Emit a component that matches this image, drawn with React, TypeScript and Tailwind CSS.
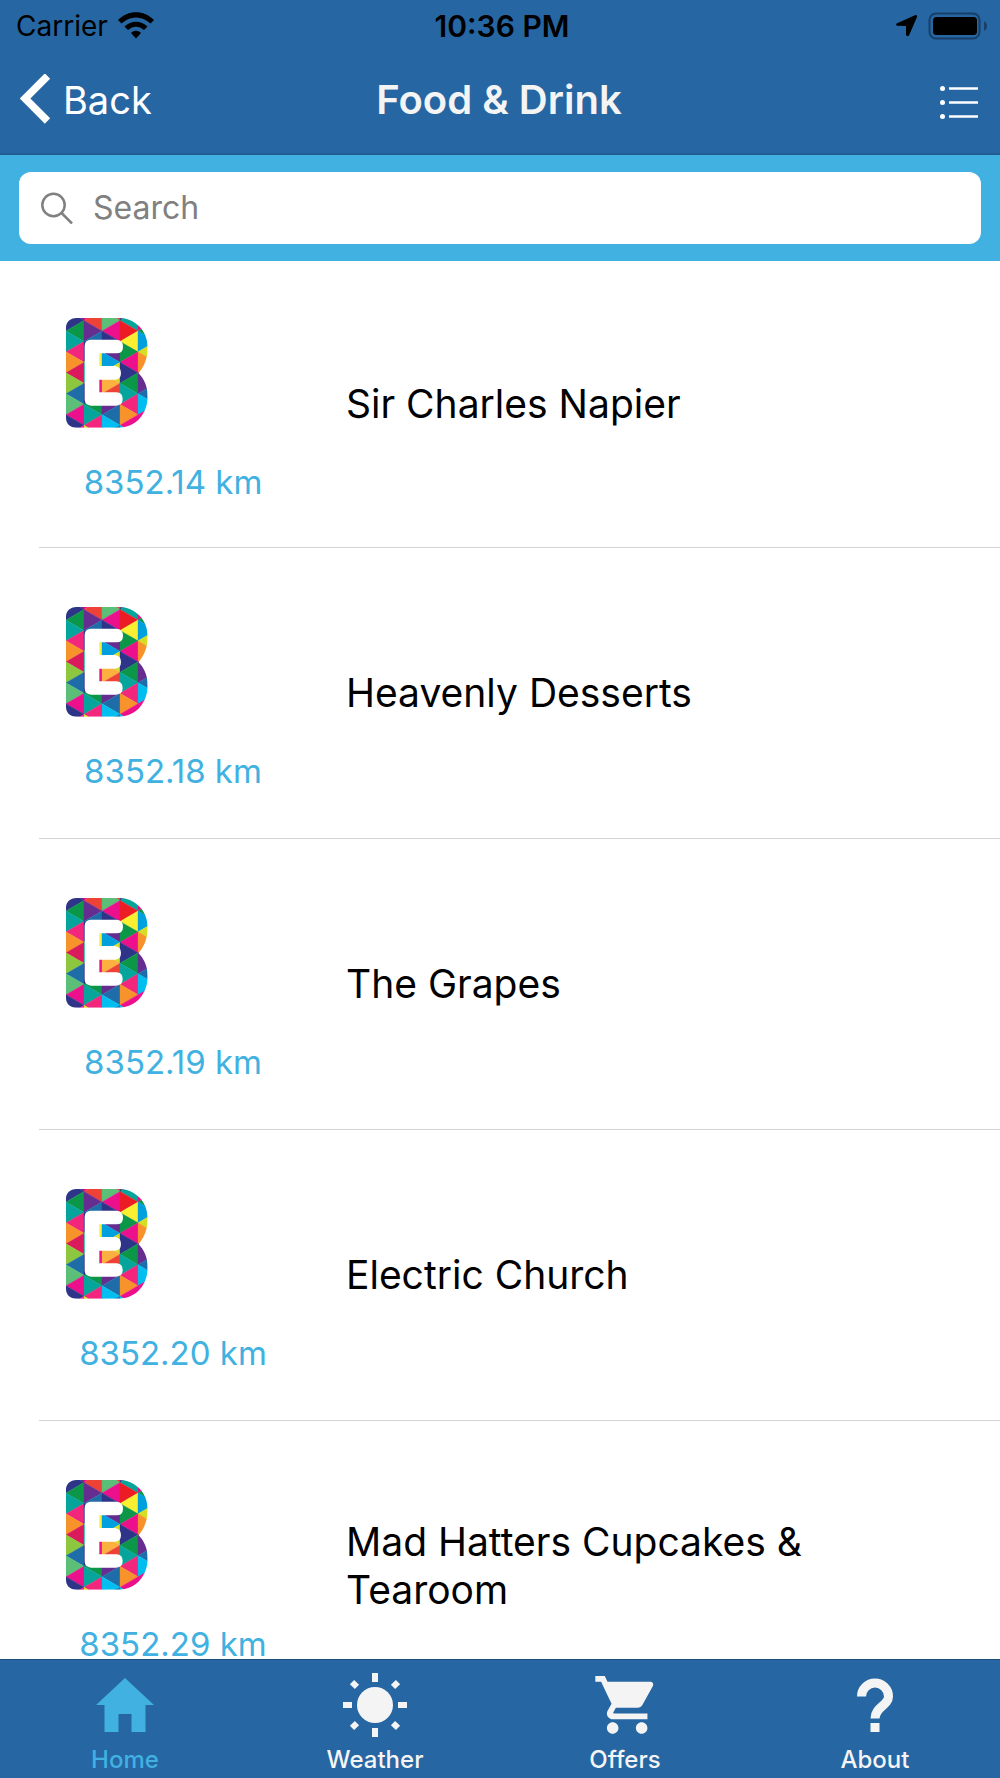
import { useState } from "react";
import { MdShoppingCart } from "react-icons/md";

type Place = {
  id: number;
  name: string;
  distance: string;
};

const places: Place[] = [
  { id: 1, name: "Sir Charles Napier", distance: "8352.14 km" },
  { id: 2, name: "Heavenly Desserts", distance: "8352.18 km" },
  { id: 3, name: "The Grapes", distance: "8352.19 km" },
  { id: 4, name: "Electric Church", distance: "8352.20 km" },
  { id: 5, name: "Mad Hatters Cupcakes & Tearoom", distance: "8352.29 km" },
];

const c = {
  navy: "#2e3589",
  purple: "#662d91",
  green: "#0b9648",
  mint: "#5bbf78",
  teal: "#06a59b",
  pink: "#f1267c",
  magenta: "#ec108c",
  crimson: "#da1a5c",
  red: "#ec1c24",
  coral: "#ef4237",
  orange: "#f7932a",
  amber: "#fbb040",
  yellow: "#fbef31",
  lime: "#8dc73f",
  acid: "#d6de23",
  blue: "#1f6da8",
  sky: "#009fdd",
  cyan: "#00bff0",
};

// One list per vertical band of the mosaic, top to bottom
const mosaic = [
  [c.purple, c.navy, c.green, c.teal, c.pink, c.orange, c.crimson, c.lime, c.blue, c.mint, c.magenta, c.navy, c.magenta],
  [c.magenta, c.coral, c.purple, c.blue, c.navy, c.yellow, c.teal, c.magenta, c.navy, c.green, c.teal, c.pink, c.acid],
  [c.coral, c.mint, c.magenta, c.navy, c.purple, c.sky, c.acid, c.amber, c.coral, c.purple, c.blue, c.cyan, c.blue],
  [c.navy, c.teal, c.red, c.yellow, c.green, c.magenta, c.navy, c.green, c.teal, c.pink, c.orange, c.magenta, c.cyan],
  [c.teal, c.magenta, c.green, c.sky, c.acid, c.orange, c.magenta, c.purple, c.blue, c.cyan, c.magenta, c.magenta, c.pink],
];

const BAND = 54;
const STEP = 31.4;

function trianglePoints(band: number, index: number) {
  const left = 47 + band * BAND;
  const right = left + BAND;
  const y = 13 + index * STEP;
  const baseOnRight = (band + index) % 2 === 0;
  const base = baseOnRight ? right : left;
  const tip = baseOnRight ? left : right;
  return `${base},${y - STEP} ${base},${y + STEP} ${tip},${y}`;
}

function Logo({ id }: { id: number }) {
  const clip = `logo-${id}`;
  return (
    <svg viewBox="47 37 246 330" className="h-[110px] w-[82px]" aria-hidden="true">
      <clipPath id={clip}>
        <path d="M78 37H205C255 37 292 76 292 125C292 158 281 186 264 202C281 218 292 243 292 272C292 326 255 366 205 366H78C59 366 47 353 47 336V67C47 50 59 37 78 37Z" />
      </clipPath>
      <g clipPath={`url(#${clip})`}>
        {mosaic.map((band, b) =>
          band.map((color, i) => (
            <polygon key={`${b}-${i}`} points={trianglePoints(b, i)} fill={color} stroke={color} strokeWidth="1" />
          ))
        )}
      </g>
      <path
        fill="#fff"
        d="M122 102H198Q218 103 218 123Q218 143 198 143H147V181H193Q212 183 212 202Q212 220 195 222H147V260H198Q217 261 217 280Q217 299 197 300H122Q103 299 103 281V121Q103 103 122 102Z"
      />
    </svg>
  );
}

function StatusBar() {
  return (
    <div className="grid h-[51px] grid-cols-3 items-center pr-3 pl-4 text-[28px] leading-8 text-black">
      <div className="flex items-center gap-[10px]">
        <span>Carrier</span>
        <svg viewBox="0 0 36 27" className="h-[27px] w-9" aria-hidden="true">
          <path d="M0 8C10-2.500 26-2.500 36 8L32.500 11.500C24 3.500 12 3.500 3.500 11.500Z" />
          <path d="M6.500 14.500C13 8 23 8 29.500 14.500L26 18C21 13.500 15 13.500 10 18Z" />
          <path d="M13 21C16 18 20 18 23 21L18 26.500Z" />
        </svg>
      </div>
      <span className="text-center text-[30px] font-semibold">10:36 PM</span>
      <div className="flex items-center justify-end gap-[10px]">
        <svg viewBox="0 0 23 23" className="h-[23px] w-[23px]" aria-hidden="true">
          <path d="M20.500 1L1.500 9.500Q.5 11.500 2 11.700L11 12V21Q12 23 14 21.500L22 3Q22.500.5 20.500 1Z" />
        </svg>
        <svg viewBox="0 0 60 28" className="h-7 w-[60px]" aria-hidden="true">
          <rect x="1.500" y="1.500" width="50" height="25" rx="6.500" fill="none" stroke="#173f68" strokeWidth="2" />
          <rect x="5" y="5" width="44" height="18" rx="3.500" />
          <path d="M56 9C60 11 60 17 56 19Z" fill="#173f68" />
        </svg>
      </div>
    </div>
  );
}

function NavBar() {
  return (
    <div className="grid h-[104px] grid-cols-3 items-center border-b-2 border-[#245b90] pr-[22px] pb-1 pl-5 text-[38px] leading-[48px] text-white">
      <button type="button" className="flex items-center gap-3">
        <svg viewBox="0 0 31 52" className="h-[52px] w-[31px]" aria-hidden="true">
          <path d="M27.500 2L5 24.500L27.500 47" fill="none" stroke="currentColor" strokeWidth="7.500" />
        </svg>
        Back
      </button>
      <h1 className="text-center text-[40px] font-semibold whitespace-nowrap text-[#f4f4f4]">Food &amp; Drink</h1>
      <button type="button" aria-label="Menu" className="justify-self-end pt-1">
        <svg viewBox="0 0 38 33" className="h-[33px] w-[38px]" aria-hidden="true">
          {[2.5, 16.5, 30.5].map((y) => (
            <g key={y}>
              <circle cx="2.500" cy={y} r="2.500" fill="currentColor" />
              <path d={`M9 ${y}H38`} stroke="currentColor" strokeWidth="2.500" />
            </g>
          ))}
        </svg>
      </button>
    </div>
  );
}

function HomeIcon() {
  return (
    <svg viewBox="0 0 64 64" className="h-16 w-16" aria-hidden="true">
      <path d="M32 5L61 32H52.500V59H38.500V41H25.500V59H11.500V32H3Z" fill="currentColor" />
    </svg>
  );
}

function SunIcon() {
  return (
    <svg viewBox="0 0 64 64" className="h-16 w-16" fill="currentColor" aria-hidden="true">
      <circle cx="32" cy="32" r="18" />
      {[0, 90, 180, 270].map((a) => (
        <rect key={a} x="29" y="0" width="6" height="9" transform={`rotate(${a} 32 32)`} />
      ))}
      {[45, 135, 225, 315].map((a) => (
        <rect key={a} x="29" y="-.5" width="6" height="7" transform={`rotate(${a} 32 32)`} />
      ))}
    </svg>
  );
}

function CartIcon() {
  return <MdShoppingCart viewBox="0.200 1 22.100 22.100" className="h-16 w-16" aria-hidden="true" />;
}

function HelpIcon() {
  return (
    <svg viewBox="0 0 64 64" className="h-16 w-16" aria-hidden="true">
      <path
        d="M18.500 23.500A13.500 13.500 0 0 1 45.500 23.500C45.500 32.500 32 34 32 45.500"
        fill="none"
        stroke="currentColor"
        strokeWidth="9"
      />
      <rect x="27.500" y="50" width="9" height="9" fill="currentColor" />
    </svg>
  );
}

const tabs = [
  { label: "Home", icon: HomeIcon },
  { label: "Weather", icon: SunIcon },
  { label: "Offers", icon: CartIcon },
  { label: "About", icon: HelpIcon },
];

export default function App() {
  const [query, setQuery] = useState("");
  const [activeTab, setActiveTab] = useState("Home");

  const visiblePlaces = places.filter((p) =>
    p.name.toLowerCase().includes(query.toLowerCase())
  );

  return (
    <div className="flex h-screen flex-col bg-white font-['Inter',sans-serif]">
      <header className="shrink-0 bg-[#2666a3]">
        <StatusBar />
        <NavBar />
      </header>

      {/* Search */}
      <div className="shrink-0 bg-[#40b1e0] px-[19px] py-[17px]">
        <label className="flex h-[72px] items-center gap-5 rounded-xl bg-white px-[22px] text-[#808080]">
          <svg viewBox="0 0 32 32" className="h-8 w-8" fill="none" stroke="currentColor" strokeWidth="2.500" aria-hidden="true">
            <circle cx="12.500" cy="13" r="11.200" />
            <path d="M20.500 21L31 31.500" />
          </svg>
          <input
            type="text"
            aria-label="Search"
            placeholder="Search"
            className="min-w-0 flex-1 text-[32px] leading-10 text-black outline-none placeholder:text-[#808080]"
            value={query}
            onChange={(e) => setQuery(e.target.value)}
          />
        </label>
      </div>

      {/* Places */}
      <ul className="min-h-0 flex-1 overflow-hidden">
        {visiblePlaces.map((p) => (
          <li key={p.id} className="h-[291px] pl-[39px] first:h-[287px]">
            <div className="flex h-full items-center border-b border-[#d3d3d8]">
              <div className="flex w-[307px] shrink-0 flex-col gap-10 pt-1.5">
                <div className="pl-[27px]">
                  <Logo id={p.id} />
                </div>
                <p className="pr-[39px] text-center text-[33px] leading-7 text-[#40b1e0]">
                  {p.distance}
                </p>
              </div>
              <h2 className="max-w-[520px] text-[39px] leading-[48px] text-black">{p.name}</h2>
            </div>
          </li>
        ))}
      </ul>

      {/* Tabs */}
      <nav className="grid h-[119px] shrink-0 grid-cols-4 border-t border-[#1d4b79] bg-[#2666a3]">
        {tabs.map(({ label, icon: Icon }) => (
          <button
            key={label}
            type="button"
            onClick={() => setActiveTab(label)}
            className={`flex flex-col items-center gap-[9px] pt-[13px] text-2xl leading-7 font-medium ${
              activeTab === label ? "text-[#40b1e0]" : "text-[#f4f4f4]"
            }`}
          >
            <Icon />
            {label}
          </button>
        ))}
      </nav>
    </div>
  );
}
